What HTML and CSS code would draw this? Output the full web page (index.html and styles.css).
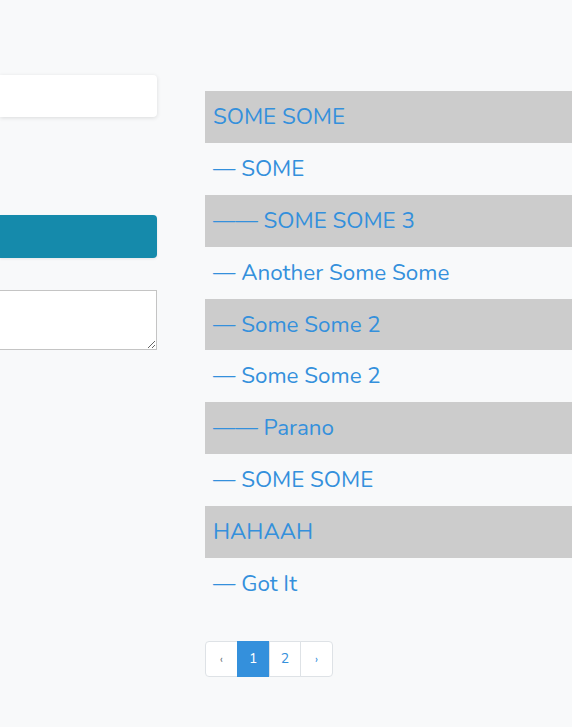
FILE: index.html
```html
<!DOCTYPE html>
<html>
<head>
<meta charset="utf-8">
<link rel="stylesheet" href="styles.css">
</head>
<body>
<div class="page">
  <div class="left">
    <div class="input"></div>
    <div class="button"></div>
    <textarea class="area"></textarea>
  </div>
  <div class="right">
    <ul class="list">
      <li class="row alt">SOME SOME</li>
      <li class="row">— SOME</li>
      <li class="row alt">—— SOME SOME 3</li>
      <li class="row">— Another Some Some</li>
      <li class="row alt">— Some Some 2</li>
      <li class="row">— Some Some 2</li>
      <li class="row alt">—— Parano</li>
      <li class="row">— SOME SOME</li>
      <li class="row alt">HAHAAH</li>
      <li class="row">— Got It</li>
    </ul>
    <div class="pager">
      <span class="pg disabled">‹</span>
      <span class="pg active">1</span>
      <span class="pg">2</span>
      <span class="pg">›</span>
    </div>
  </div>
</div>
</body>
</html>
```
FILE: styles.css
```css
html, body { margin: 0; padding: 0; }
body {
  background: #f8f9fa;
  font-family: Nunito, Lato, "Noto Sans", sans-serif;
  overflow: hidden;
}
.page {
  display: flex;
  gap: 48px;
  padding-top: 75px;
}
.left {
  width: 157px;
  flex: none;
  display: flex;
  flex-direction: column;
}
.input {
  height: 42px;
  background: #fff;
  border-radius: 0 4px 4px 0;
  box-shadow: 0 1px 4px rgba(0,0,0,0.12);
}
.button {
  margin-top: 98px;
  height: 43px;
  background: #158aab;
  border-radius: 0 4px 4px 0;
  box-shadow: 0 1px 3px rgba(0,0,0,0.08);
}
.area {
  margin: 32px 0 0;
  height: 60px;
  box-sizing: border-box;
  width: 157px;
  border: 1px solid #c4c4c4;
  border-left: none;
  background: #fff;
  padding: 0;
  display: block;
}
.right {
  flex: 1;
  padding-top: 16px;
}
.list {
  list-style: none;
  margin: 0;
  padding: 0;
}
.row {
  height: 51.9px;
  line-height: 51.9px;
  padding-left: 8px;
  font-size: 22.4px;
  color: #3490dc;
  white-space: nowrap;
}
.row.alt { background: #cccccc; }
.pager {
  margin-top: 31px;
  display: flex;
}
.pg {
  width: 32.75px;
  height: 36px;
  box-sizing: border-box;
  display: flex;
  align-items: center;
  justify-content: center;
  border: 1px solid #dee2e6;
  margin-left: -1px;
  background: #fff;
  color: #3490dc;
  font-size: 14px;
}
.pg:first-child { margin-left: 0; border-radius: 4px 0 0 4px; font-size: 12px; }
.pg:last-child { border-radius: 0 4px 4px 0; font-size: 12px; }
.pg.disabled { color: #6c757d; }
.pg.active { background: #3490dc; border-color: #3490dc; color: #fff; }
```
